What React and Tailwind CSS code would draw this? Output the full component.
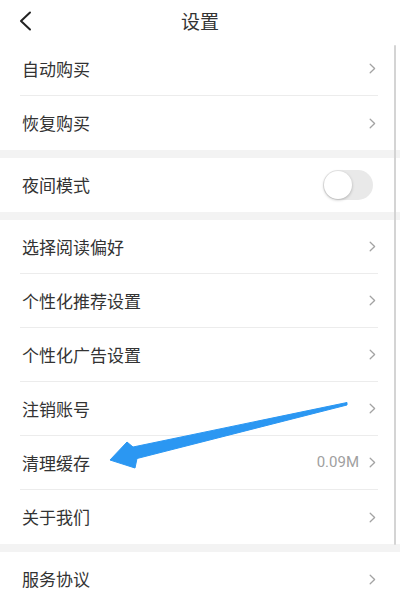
const groups = [
  [
    { label: "自动购买" },
    { label: "恢复购买" },
  ],
  [{ label: "夜间模式", toggle: true }],
  [
    { label: "选择阅读偏好" },
    { label: "个性化推荐设置" },
    { label: "个性化广告设置" },
    { label: "注销账号" },
    { label: "清理缓存", value: "0.09M" },
    { label: "关于我们" },
  ],
  [{ label: "服务协议" }],
];

function Chevron() {
  return (
    <svg width="7" height="11" viewBox="0 0 7 11" fill="none">
      <path d="M1.2 1.2L5.6 5.5L1.2 9.8" stroke="#a3a3a3" strokeWidth="1.3" strokeLinecap="round" strokeLinejoin="round" />
    </svg>
  );
}

function Toggle() {
  return (
    <div className="mr-[5px] flex h-[30px] w-[50px] items-center rounded-full bg-[#e9e9e9] px-[1px]">
      <div className="h-[28px] w-[28px] rounded-full bg-white shadow-[0_1px_3px_rgba(0,0,0,0.25)]" />
    </div>
  );
}

function Row({ item, last }) {
  return (
    <div className="h-[54px] pl-5 pr-[22px]">
      <div
        className={
          "flex h-full items-center justify-between " +
          (last ? "" : "border-b border-[#ececec]")
        }
      >
        <span className="pl-[2px] text-[17px] text-[#333333]">{item.label}</span>
        {item.toggle ? (
          <Toggle />
        ) : (
          <div className="flex items-center gap-[10px] pr-[2px]">
            {item.value && (
              <span className="text-[15px] text-[#a0a0a0] font-['Roboto',sans-serif]">{item.value}</span>
            )}
            <Chevron />
          </div>
        )}
      </div>
    </div>
  );
}

export default function App() {
  return (
    <div className="relative h-[600px] w-[400px] overflow-hidden bg-white font-['Noto_Sans_CJK_SC','Noto_Sans',sans-serif]">
      <div className="grid h-[42px] grid-cols-[60px_1fr_60px] items-center">
        <div className="pl-[18px]">
          <svg width="16" height="20" viewBox="0 0 16 20" fill="none">
            <path d="M12 1.5L3 10L12 18.5" stroke="#222222" strokeWidth="2" strokeLinecap="round" strokeLinejoin="round" />
          </svg>
        </div>
        <h1 className="text-center text-[19px] text-[#333333]">设置</h1>
        <div />
      </div>

      {groups.map((group, gi) => (
        <div key={gi} className={gi > 0 ? "border-t-8 border-[#f3f3f3]" : ""}>
          {group.map((item, i) => (
            <Row key={item.label} item={item} last={i === group.length - 1} />
          ))}
        </div>
      ))}

      {/* scroll indicator */}
      <div className="absolute right-[4px] top-[45px] h-[500px] w-[2px] rounded-full bg-[#d4d4d4]" />

      {/* pointer arrow */}
      <svg className="absolute left-0 top-0" width="400" height="600" viewBox="0 0 400 600">
        <path
          d="M347 402.5 L133 447 L127 442 L110 460 L135 468 L137 458.5 L347 405 Z"
          fill="#2b97f2"
          stroke="#2b97f2"
          strokeWidth="1"
          strokeLinejoin="round"
        />
      </svg>
    </div>
  );
}
